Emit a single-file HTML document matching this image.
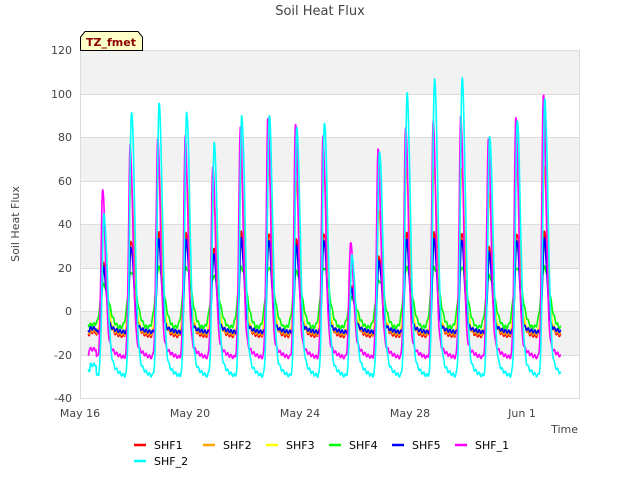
<!DOCTYPE html>
<html><head><meta charset="utf-8"><style>
body{margin:0;background:#fff;width:640px;height:480px;overflow:hidden}
svg{display:block;font-family:"DejaVu Sans","Liberation Sans",sans-serif}
</style></head><body>
<svg id="s" width="640" height="480" xmlns="http://www.w3.org/2000/svg">
<rect x="80" y="50" width="500" height="348" fill="#fff"/>
<rect x="80" y="50" width="500" height="44" fill="#f2f2f2"/>
<rect x="80" y="137" width="500" height="44" fill="#f2f2f2"/>
<rect x="80" y="224" width="500" height="44" fill="#f2f2f2"/>
<rect x="80" y="311" width="500" height="44" fill="#f2f2f2"/>
<g stroke="#dcdcdc" stroke-width="1">
<line x1="80" x2="580" y1="50.5" y2="50.5"/><line x1="80" x2="580" y1="94.5" y2="94.5"/>
<line x1="80" x2="580" y1="137.5" y2="137.5"/><line x1="80" x2="580" y1="181.5" y2="181.5"/>
<line x1="80" x2="580" y1="224.5" y2="224.5"/><line x1="80" x2="580" y1="268.5" y2="268.5"/>
<line x1="80" x2="580" y1="311.5" y2="311.5"/><line x1="80" x2="580" y1="355.5" y2="355.5"/>
<line x1="80" x2="580" y1="398.5" y2="398.5"/>
<line x1="80.5" x2="80.5" y1="50" y2="398"/><line x1="579.5" x2="579.5" y1="50" y2="398"/>
</g>
<g id="curves" fill="none" stroke-width="1.6" stroke-linejoin="round"></g>
<g font-size="11" fill="#444" text-anchor="end">
<text x="72" y="54">120</text><text x="72" y="98">100</text><text x="72" y="141">80</text>
<text x="72" y="185">60</text><text x="72" y="228">40</text><text x="72" y="272">20</text>
<text x="72" y="315">0</text><text x="72" y="359">-20</text><text x="72" y="402">-40</text>
</g>
<g font-size="11" fill="#444" text-anchor="middle">
<text x="80" y="417">May 16</text><text x="190" y="417">May 20</text><text x="300" y="417">May 24</text>
<text x="410" y="417">May 28</text><text x="522" y="417">Jun 1</text>
</g>
<text x="578" y="433" font-size="11" fill="#444" text-anchor="end">Time</text>
<text x="320" y="15" font-size="13" fill="#444" text-anchor="middle">Soil Heat Flux</text>
<text transform="translate(19,224) rotate(-90)" font-size="11" fill="#444" text-anchor="middle">Soil Heat Flux</text>
<path d="M80.5,50.5 V37 L85,31.5 H138 L142.5,37 V50.5 Z" fill="#ffffc8" stroke="#000"/>
<text x="111" y="46" font-size="11" font-weight="bold" fill="#8b0000" text-anchor="middle">TZ_fmet</text>
<g stroke-width="2.5">
<line x1="134" x2="146" y1="445" y2="445" stroke="#ff0000"/>
<line x1="203" x2="215" y1="445" y2="445" stroke="#ffa500"/>
<line x1="266" x2="278" y1="445" y2="445" stroke="#ffff00"/>
<line x1="329" x2="341" y1="445" y2="445" stroke="#00ff00"/>
<line x1="392" x2="404" y1="445" y2="445" stroke="#0000ff"/>
<line x1="455" x2="467" y1="445" y2="445" stroke="#ff00ff"/>
<line x1="134" x2="146" y1="461" y2="461" stroke="#00ffff"/>
</g>
<g font-size="11" fill="#000">
<text x="154" y="449">SHF1</text><text x="223" y="449">SHF2</text><text x="286" y="449">SHF3</text>
<text x="349" y="449">SHF4</text><text x="412" y="449">SHF5</text><text x="475" y="449">SHF_1</text>
<text x="154" y="465">SHF_2</text>
</g>
</svg>
<script>
(function(){
var cyan=[44,92,95,92,77,90,90,84,87,25,74,100,107,107,80,88,97,0];
var mag=[56,76,80,80,67,84,89,86,80,32,74,85,87,90,79,89,100,0];
var scale=[0.6,0.9,1,1,0.8,1,1,0.9,1,0.3,0.7,1,1,1,0.8,1,1,0];
function X(d){return 80+d*27.55}
function Y(v){return 311-v*2.175}
var series=[
 {c:"#ff0000",min:-12,pk:function(i){return 36*scale[i]},w:0.14},
 {c:"#ffa500",min:-11,pk:function(i){return 66*scale[i]},w:0.11},
 {c:"#ffff00",min:-10,pk:function(i){return 30*scale[i]},w:0.14},
 {c:"#00ff00",min:-8,pk:function(i){return 20*scale[i]},w:0.2},
 {c:"#0000ff",min:-10,pk:function(i){return 33*scale[i]},w:0.1},
 {c:"#ff00ff",min:-22,pk:function(i){return mag[i]},w:0.1,off:-0.03},
 {c:"#00ffff",min:-31,pk:function(i){return cyan[i]},w:0.12,off:0.02}
];
var g=document.getElementById("curves"),h="";
series.forEach(function(s){
 var p=[];
 for(var t=0.3;t<=17.45;t+=0.015){
  var c=0.85+(s.off||0);
  var k=Math.round(t-c); // nearest peak index
  var dt=t-(k+c);
  var i=Math.max(0,Math.min(17,k));
  var pk=s.pk(i),mn=s.min;
  var w=dt<0?s.w*0.8:s.w*1.3;
  var g1=Math.exp(-Math.pow(dt/w,2));
  // night: after peak relax slowly toward min
  var since=dt>=0?dt:dt+1;
  var base=mn+(0-mn)*Math.exp(-since/0.25)*0.8;
  if(k<=0&&dt<0&&t<0.6)base=mn*0.8;
  var v=base*(1-g1)+pk*g1;
  v+=Math.sin(t*53)*0.8;
  p.push(X(t).toFixed(1)+","+Y(v).toFixed(1));
 }
 h+='<polyline stroke="'+s.c+'" points="'+p.join(" ")+'"/>';
});
g.innerHTML=h;
})();
</script>
</body></html>
